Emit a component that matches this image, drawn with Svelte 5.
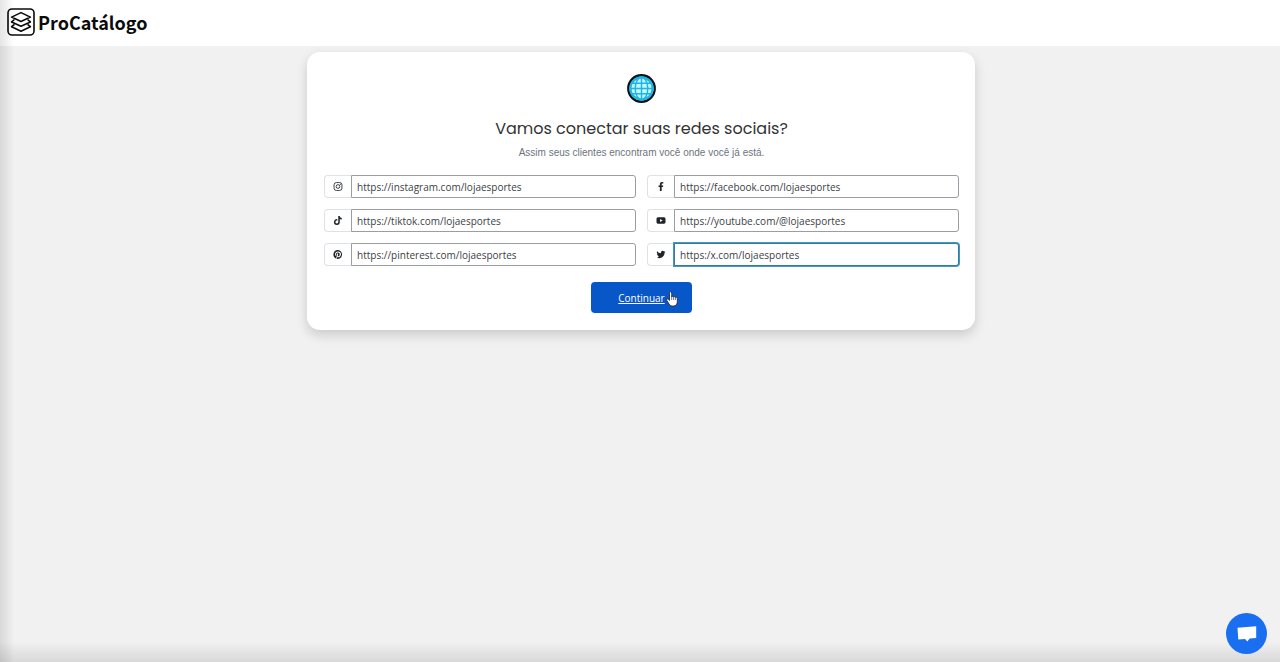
<script lang="ts">
  type Network = { id: string; label: string; url: string; focused?: boolean };

  let networks = $state<Network[]>([
    { id: 'instagram', label: 'Instagram', url: 'https://instagram.com/lojaesportes' },
    { id: 'facebook', label: 'Facebook', url: 'https://facebook.com/lojaesportes' },
    { id: 'tiktok', label: 'TikTok', url: 'https://tiktok.com/lojaesportes' },
    { id: 'youtube', label: 'YouTube', url: 'https://youtube.com/@lojaesportes' },
    { id: 'pinterest', label: 'Pinterest', url: 'https://pinterest.com/lojaesportes' },
    { id: 'twitter', label: 'Twitter', url: 'https:/x.com/lojaesportes', focused: true },
  ]);
</script>

{#snippet icon(id: string)}
  <svg class="network-icon" viewBox="0 0 16 16" aria-hidden="true">
    {#if id === 'instagram'}
      <rect x="1" y="1" width="14" height="14" rx="4" fill="none" stroke="currentColor" stroke-width="1.5" />
      <circle cx="8" cy="8" r="3.3" fill="none" stroke="currentColor" stroke-width="1.5" />
      <circle cx="12.2" cy="3.9" r="1" />
    {:else if id === 'facebook'}
      <path d="M6 16V9H3.6V6.200H6V4.200C6 1.600 7.500.200 9.900.200c1.100 0 2.200.200 2.200.200v2.400h-1.300c-1.200 0-1.600.800-1.600 1.500v1.900H12L11.500 9H9.200v7z" />
    {:else if id === 'tiktok'}
      <path d="M8.500 0H11.200c.2 2 1.500 3.400 3.500 3.600v2.700c-1.300 0-2.500-.4-3.500-1.100v5.500A5.200 5.200 0 1 1 6.800 5.600v2.800a2.500 2.500 0 1 0 1.700 2.400z" />
    {:else if id === 'youtube'}
      <path fill-rule="evenodd" d="M2.500 2.400C5.500 1.900 10.500 1.900 13.500 2.400c1.500.2 2.500 1.100 2.500 2.600v6c0 1.500-1 2.400-2.500 2.600-3 .5-8 .5-11 0C1 13.400 0 12.500 0 11V5c0-1.500 1-2.400 2.500-2.600zM6.400 5.200v5.600L11 8z" />
    {:else if id === 'pinterest'}
      <path d="M8 0a8 8 0 0 0-2.900 15.500c-.1-.6-.1-1.600 0-2.300l.9-4s-.2-.5-.2-1.200c0-1.100.6-1.900 1.400-1.900.7 0 1 .5 1 1.100 0 .7-.4 1.700-.6 2.600-.2.800.4 1.400 1.100 1.400 1.400 0 2.400-1.500 2.400-3.600 0-1.900-1.300-3.200-3.300-3.200a3.400 3.400 0 0 0-3.500 3.400c0 .7.300 1.400.6 1.800l-.3 1.100C3.400 10.200 2.800 9 2.800 7.800c0-2.600 1.900-5 5.400-5 2.900 0 5.100 2 5.100 4.800 0 2.800-1.800 5.100-4.300 5.100-.8 0-1.600-.4-1.900-1l-.5 2c-.2.700-.7 1.600-1 2.100A8 8 0 1 0 8 0z" />
    {:else}
      <path d="M5 14.500c6 0 9.300-5 9.300-9.300v-.4A6.600 6.600 0 0 0 16 3.100a6.600 6.600 0 0 1-1.900.5 3.300 3.300 0 0 0 1.400-1.800c-.6.400-1.300.6-2.100.8a3.300 3.300 0 0 0-5.600 3A9.300 9.300 0 0 1 1.100 2.100a3.300 3.300 0 0 0 1 4.400c-.5 0-1-.2-1.500-.4a3.300 3.300 0 0 0 2.600 3.200c-.5.200-1 .2-1.500.1a3.300 3.300 0 0 0 3.100 2.300A6.600 6.600 0 0 1 0 13.100a9.300 9.300 0 0 0 5 1.400z" />
    {/if}
  </svg>
{/snippet}

<div class="page">
  <header class="topbar">
    <a class="brand" href="/">
      <svg class="brand-mark" viewBox="0 0 28 28" fill="none" stroke="#0b0b0b" stroke-linejoin="round" aria-hidden="true">
        <rect x="1" y="1" width="26" height="26" rx="4" stroke-width="1.600" />
        <g stroke-width="1.600">
          <path d="M14 4.600 23.400 9.100 14 13.400 4.600 9.100z" />
          <path d="M7.500 11.500 4.600 13.900 14 18.200l9.400-4.300-2.900-2.400" />
          <path d="M7.500 16.300 4.600 18.700 14 23.200l9.400-4.500-2.900-2.400" />
        </g>
      </svg>
      <span>ProCatálogo</span>
    </a>
  </header>

  <main>
    <form class="card" onsubmit={(e) => e.preventDefault()}>
      <svg class="globe" viewBox="0 0 30 30" fill="none" aria-hidden="true">
        <circle cx="15" cy="15" r="13.700" fill="#c4f7ff" stroke="#07141c" stroke-width="2.400" />
        <g stroke="#1fb4e6" stroke-width="1.500">
          <circle cx="15" cy="15" r="11.500" stroke-width="2.200" />
          <ellipse cx="15" cy="15" rx="6.500" ry="11.500" />
          <path d="M15 3v24M3.500 15h23M5 9.500h20M5 20.500h20" />
        </g>
      </svg>
      <h1>Vamos conectar suas redes sociais?</h1>
      <p>Assim seus clientes encontram você onde você já está.</p>

      <div class="networks">
        {#each networks as network (network.id)}
          <div class="field">
            <label for={network.id} aria-label={network.label}>
              {@render icon(network.id)}
            </label>
            <input
              id={network.id}
              type="text"
              class:focused={network.focused}
              spellcheck="false"
              bind:value={network.url}
            />
          </div>
        {/each}
      </div>

      <button type="submit" class="continue">
        Continuar
        <svg class="pointer" viewBox="0 0 12 16" aria-hidden="true">
          <path
            d="M3.500 9.500V2c0-1.800 2.200-1.800 2.200 0v4c.3-1 1.800-.8 1.900.2.400-.8 1.700-.6 1.800.4.500-.6 1.900-.3 1.900.8v3.200c0 2.400-1.300 4.400-3.600 4.400H6.200c-1.500 0-2.400-.8-3.100-2L.7 9.300C.2 8.200 1.400 7.500 2.300 8.300z"
            fill="#fff"
            stroke="#222"
            stroke-width="0.800"
          />
          <path d="M5.700 6v3M7.600 6.500v2.500M9.400 7v2" stroke="#222" stroke-width="0.600" />
        </svg>
      </button>
    </form>
  </main>

  <button type="button" class="chat" aria-label="Chat">
    <svg viewBox="0 0 20 16" aria-hidden="true">
      <path d="M.5 1.800 19.200.300V12l-6.500.600-2.400 3-2.200-2.600-6.800.5z" fill="#fff" />
    </svg>
  </button>
  <div class="edge edge--left"></div>
  <div class="edge edge--bottom"></div>
</div>

<style>
  :global(body) {
    margin: 0;
    background: #f1f1f1;
  }

  .page {
    min-height: 100vh;
    font-family: 'Segoe UI', 'Open Sans', 'Noto Sans', sans-serif;
    color: #212529;
  }

  .topbar {
    display: flex;
    align-items: center;
    height: 46px;
    padding: 0 7px;
    box-sizing: border-box;
    background: #fff;
  }

  .brand {
    display: flex;
    align-items: center;
    gap: 3px;
    height: 28px;
    margin-bottom: 2px;
    color: #0b0b0b;
    font-family: 'Source Sans Pro', 'Noto Sans CJK SC', sans-serif;
    font-size: 18px;
    font-weight: 700;
    line-height: 28px;
    text-decoration: none;
  }

  .brand-mark {
    width: 28px;
    height: 28px;
  }

  main {
    display: flex;
    justify-content: center;
    padding: 6px 16px 32px 18px;
  }

  .card {
    display: flex;
    flex-direction: column;
    align-items: center;
    width: 100%;
    max-width: 668px;
    box-sizing: border-box;
    padding: 22px 16px 17px 17px;
    border-radius: 13px;
    background: #fff;
    box-shadow: 0 5px 12px rgba(0, 0, 0, 0.16);
  }

  .globe {
    width: 29px;
    height: 29px;
  }

  h1 {
    margin: 13px 0 0;
    color: #333;
    font-family: Poppins, Inter, sans-serif;
    font-size: 16px;
    font-weight: 400;
    line-height: 26px;
    text-align: center;
  }

  p {
    margin: 3px 0 0;
    color: #6c757d;
    font-family: 'Liberation Sans', Arial, sans-serif;
    font-size: 10px;
    line-height: 16px;
    text-align: center;
  }

  .networks {
    display: grid;
    grid-template-columns: repeat(auto-fit, minmax(240px, 1fr));
    gap: 11px;
    width: 100%;
    margin-top: 14px;
  }

  .field {
    display: flex;
    height: 23px;
  }

  .field label {
    display: flex;
    align-items: center;
    justify-content: center;
    width: 27px;
    box-sizing: border-box;
    border: 1px solid #dee2e6;
    border-right: 0;
    border-radius: 4px 0 0 4px;
  }

  .network-icon {
    width: 10px;
    height: 9px;
    fill: currentColor;
  }

  .field input {
    flex: 1;
    min-width: 0;
    box-sizing: border-box;
    padding: 0 5px;
    border: 1px solid #9a9ea3;
    border-radius: 0 3px 3px 0;
    outline: none;
    background: #fff;
    color: #3c4146;
    font-family: inherit;
    font-size: 10px;
  }

  .field input:focus,
  .field input.focused {
    border-color: #2b7ea6;
    box-shadow: 0 0 0 1px #4a96ba;
  }

  .continue {
    position: relative;
    min-width: 101px;
    height: 31px;
    margin-top: 16px;
    padding: 0 26px;
    border: 0;
    border-radius: 4px;
    background: #0757c8;
    color: #fff;
    font-family: inherit;
    font-size: 10px;
    text-decoration: underline;
    cursor: pointer;
  }

  .pointer {
    position: absolute;
    top: 9px;
    right: 14px;
    width: 12px;
    height: 16px;
  }

  .chat {
    position: fixed;
    right: 13px;
    bottom: 8px;
    z-index: 2;
    display: flex;
    align-items: center;
    justify-content: center;
    width: 41px;
    height: 41px;
    padding: 0;
    border: 0;
    border-radius: 50%;
    background: #1a6ff0;
    cursor: pointer;
  }

  .chat svg {
    width: 20px;
    height: 16px;
  }

  .edge {
    position: fixed;
    bottom: 0;
    left: 0;
    pointer-events: none;
  }

  .edge--left {
    top: 0;
    width: 14px;
    background: linear-gradient(to right, rgba(0, 0, 0, 0.1), transparent);
  }

  .edge--bottom {
    right: 0;
    height: 20px;
    background: linear-gradient(to top, rgba(0, 0, 0, 0.1), transparent);
  }
</style>
